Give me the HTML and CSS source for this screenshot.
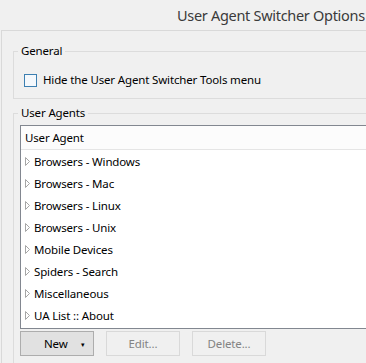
FILE: index.html
```html
<!DOCTYPE html>
<html lang="en">

<head>
    <meta charset="UTF-8">
    <title>User Agent Switcher Options</title>
    <link rel="stylesheet" href="styles.css">
</head>

<body>
    <div class="window">
        <div class="title">User Agent Switcher Options</div>

        <div class="panel">
            <fieldset class="group general">
                <legend>General</legend>
                <label class="check-row">
                    <span class="checkbox"></span>
                    <span>Hide the User Agent Switcher Tools menu</span>
                </label>
            </fieldset>

            <fieldset class="group agents">
                <legend>User Agents</legend>
                <div class="list">
                    <div class="list-header">User Agent</div>
                    <div class="row"><svg class="twisty" width="5" height="9" viewBox="0 0 5 9"><polygon points="0.5,0.5 4.5,4.5 0.5,8.5" /></svg>Browsers - Windows</div>
                    <div class="row"><svg class="twisty" width="5" height="9" viewBox="0 0 5 9"><polygon points="0.5,0.5 4.5,4.5 0.5,8.5" /></svg>Browsers - Mac</div>
                    <div class="row"><svg class="twisty" width="5" height="9" viewBox="0 0 5 9"><polygon points="0.5,0.5 4.5,4.5 0.5,8.5" /></svg>Browsers - Linux</div>
                    <div class="row"><svg class="twisty" width="5" height="9" viewBox="0 0 5 9"><polygon points="0.5,0.5 4.5,4.5 0.5,8.5" /></svg>Browsers - Unix</div>
                    <div class="row"><svg class="twisty" width="5" height="9" viewBox="0 0 5 9"><polygon points="0.5,0.5 4.5,4.5 0.5,8.5" /></svg>Mobile Devices</div>
                    <div class="row"><svg class="twisty" width="5" height="9" viewBox="0 0 5 9"><polygon points="0.5,0.5 4.5,4.5 0.5,8.5" /></svg>Spiders - Search</div>
                    <div class="row"><svg class="twisty" width="5" height="9" viewBox="0 0 5 9"><polygon points="0.5,0.5 4.5,4.5 0.5,8.5" /></svg>Miscellaneous</div>
                    <div class="row"><svg class="twisty" width="5" height="9" viewBox="0 0 5 9"><polygon points="0.5,0.5 4.5,4.5 0.5,8.5" /></svg>UA List :: About</div>
                </div>

                <div class="btn-group">
                    <button class="btn btn-split">New <span class="caret">&#9662;</span></button>
                    <button class="btn" disabled>Edit...</button>
                    <button class="btn" disabled>Delete...</button>
                </div>
            </fieldset>
        </div>
    </div>
</body>

</html>
```

FILE: styles.css
```css
* {
    margin: 0;
    padding: 0;
    box-sizing: border-box;
}

body {
    font-family: 'Noto Sans', 'Open Sans', sans-serif;
    font-size: 11.5px;
    letter-spacing: -0.15px;
    color: #000;
    background: #f0f0f0;
    overflow: hidden;
}

.window {
    width: 366px;
    height: 363px;
    overflow: hidden;
}

.title {
    height: 30px;
    padding-left: 177px;
    padding-top: 4px;
    font-size: 14.5px;
    letter-spacing: -0.3px;
    line-height: 22px;
    color: #3a3a3a;
    white-space: nowrap;
}

.panel {
    margin-left: 1px;
    width: 400px;
    border-top: 1px solid #d9d9d9;
    border-left: 1px solid #d9d9d9;
    padding-top: 12px;
    height: 333px;
}

.group {
    margin-left: 11px;
    border: 1px solid #dcdcdc;
    padding: 0 4px;
}

.group legend {
    padding: 0 3px;
    line-height: 16px;
    color: #000;
}

.general {
    padding-top: 13px;
    padding-bottom: 10px;
}

.check-row {
    display: flex;
    align-items: center;
    gap: 6px;
    margin-left: 6px;
    line-height: 16px;
}

.checkbox {
    width: 13px;
    height: 13px;
    border: 1px solid #3c7fb1;
    background: #f4f8fc;
}

.agents {
    margin-top: 6px;
    padding-top: 4px;
    border-bottom: none;
    height: 300px;
}

.list {
    margin-left: 2px;
    border: 1px solid #828790;
    background: #fff;
    padding-bottom: 2px;
}

.list-header {
    height: 24px;
    line-height: 23px;
    padding-left: 4px;
    background: #fcfcfc;
    border-bottom: 1px solid #e5e5e5;
}

.row {
    height: 22px;
    display: flex;
    align-items: center;
    padding-left: 4px;
    white-space: nowrap;
}

.twisty {
    margin-right: 4px;
    fill: none;
    stroke: #a6a6a6;
    stroke-width: 1;
}

.btn-group {
    display: flex;
    gap: 12px;
    margin-top: 2px;
    margin-left: 2px;
}

.btn {
    width: 74px;
    height: 25px;
    font-family: inherit;
    font-size: 11.5px;
    letter-spacing: -0.15px;
    color: #000;
    background: #e1e1e1;
    border: 1px solid #adadad;
}

.btn-split {
    text-align: left;
    padding-left: 23px;
}

.btn:disabled {
    color: #838383;
    background: #f0f0f0;
    border-color: #d9d9d9;
}

.caret {
    font-size: 7px;
    margin-left: 11px;
    vertical-align: 1px;
}
```
